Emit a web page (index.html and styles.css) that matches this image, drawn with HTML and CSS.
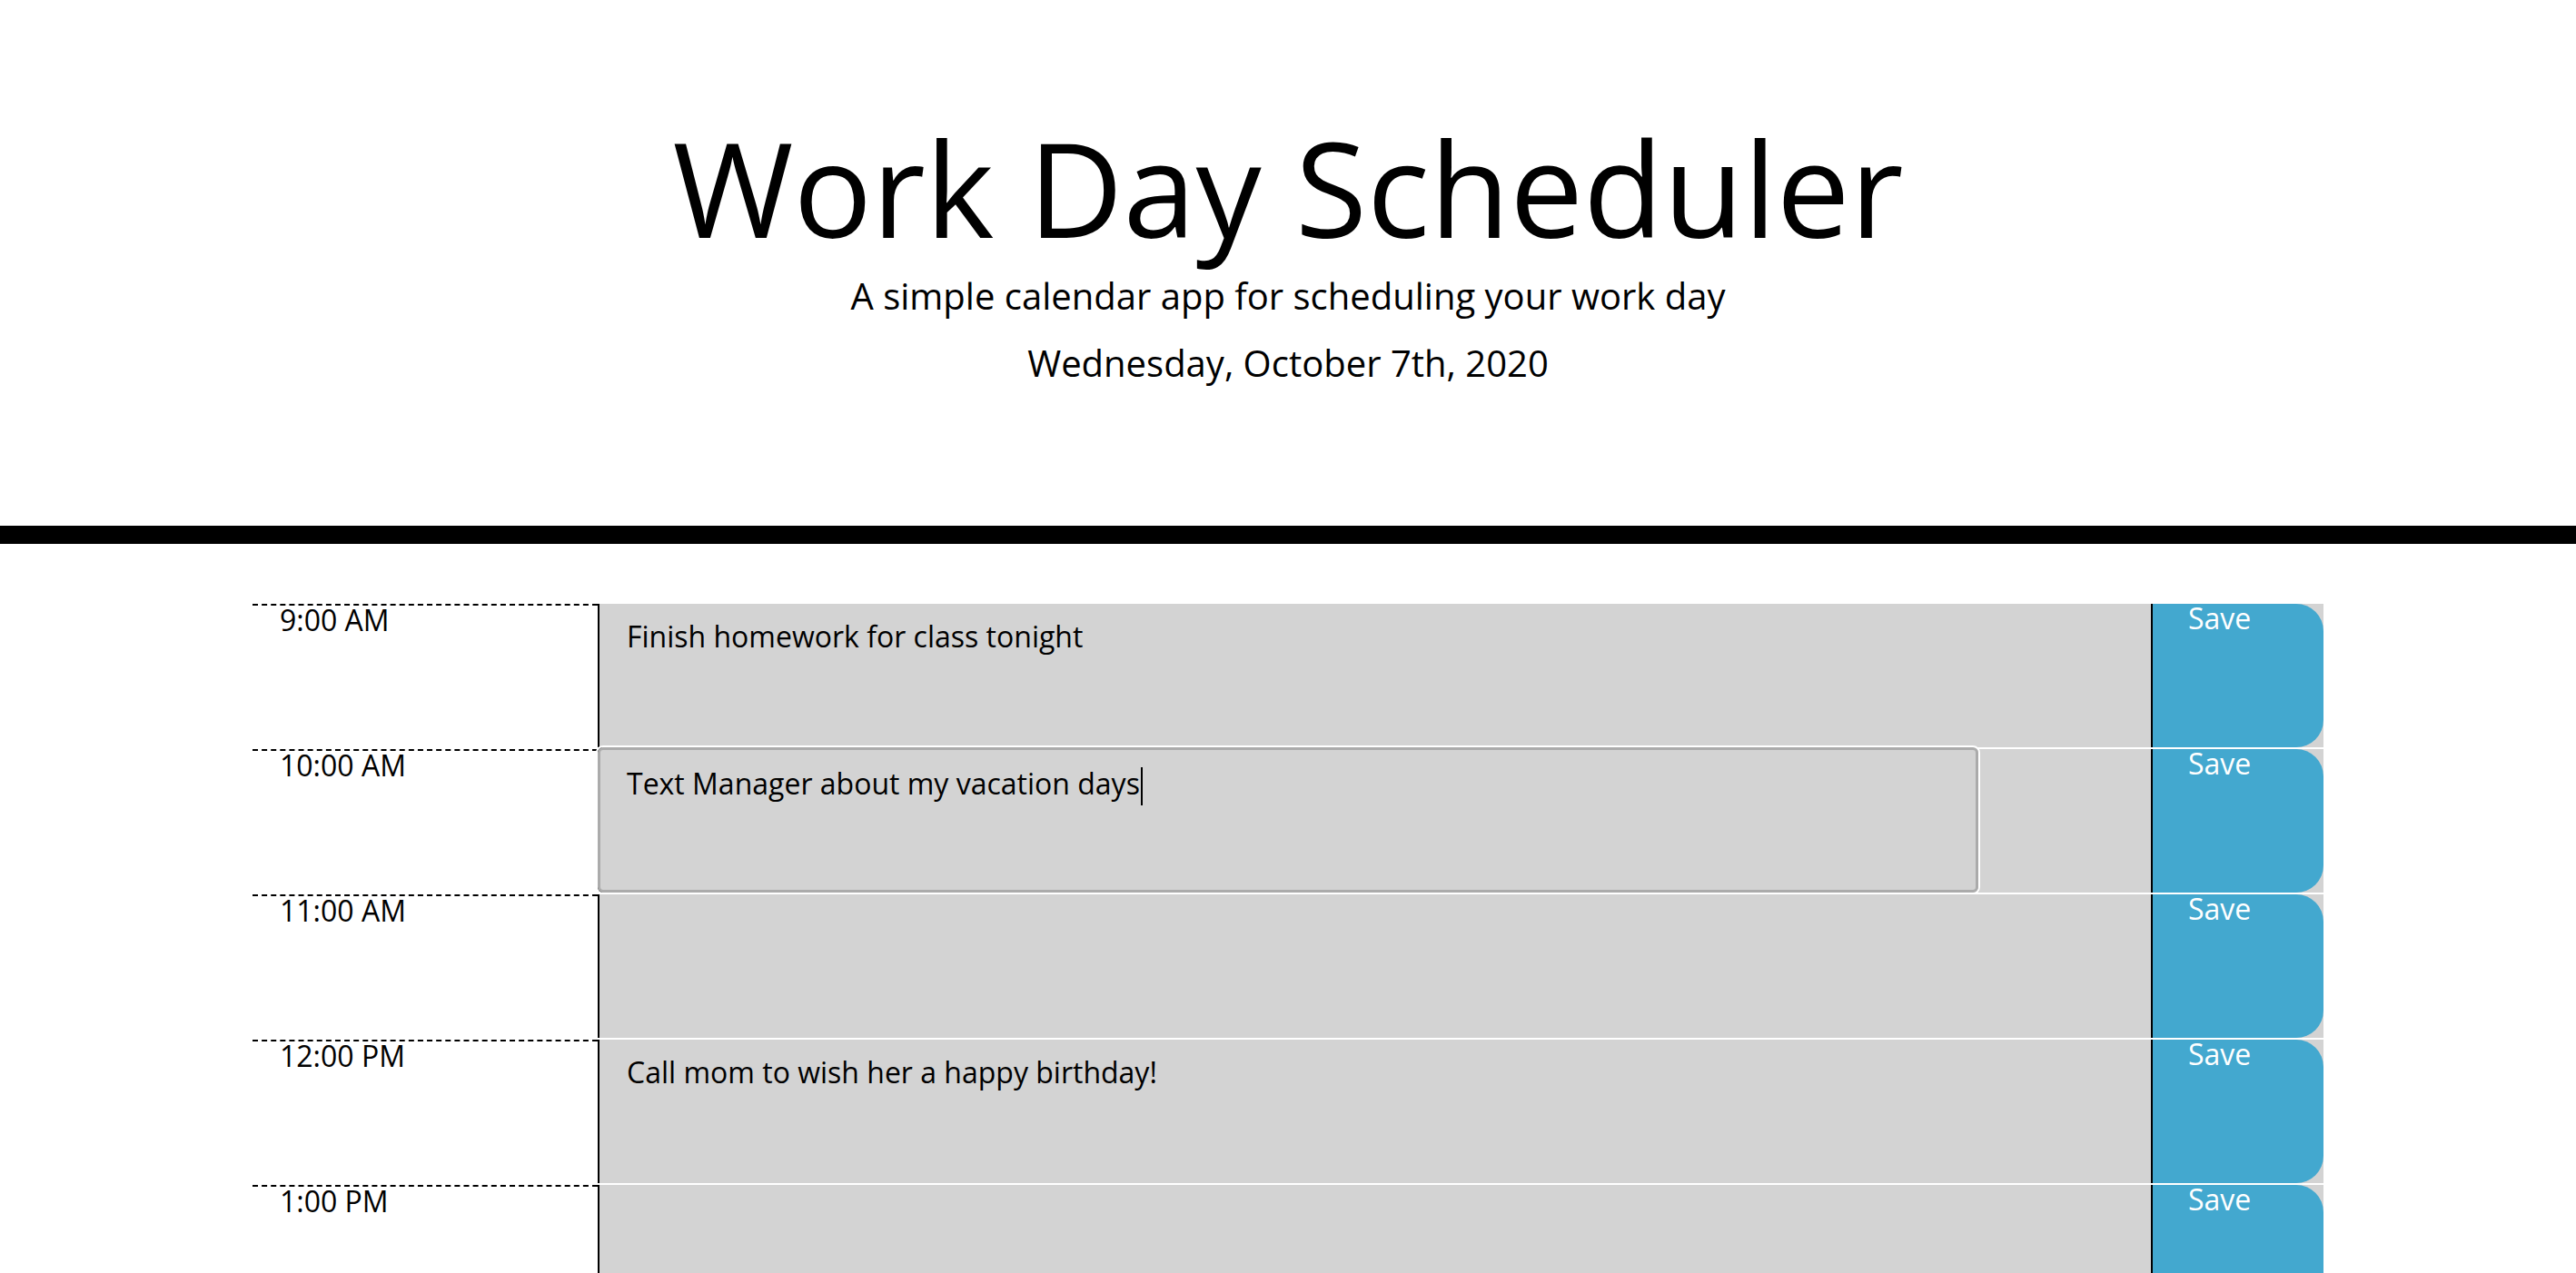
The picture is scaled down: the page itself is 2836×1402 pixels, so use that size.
FILE: index.html
```html
<!DOCTYPE html>
<html lang="en">
<head>
<meta charset="utf-8">
<title>Work Day Scheduler</title>
<link rel="stylesheet" href="styles.css">
</head>
<body>
<header class="jumbotron">
  <h1 class="display-3">Work Day Scheduler</h1>
  <p class="lead">A simple calendar app for scheduling your work day</p>
  <p class="lead current-day">Wednesday, October 7th, 2020</p>
</header>
<main class="container">
  <div class="time-block past">
    <div class="hour">9:00 AM</div>
    <div class="desc-area"><div class="description">Finish homework for class tonight</div></div>
    <button class="saveBtn">Save</button>
  </div>
  <div class="time-block past">
    <div class="hour">10:00 AM</div>
    <div class="desc-area"><div class="description focused">Text Manager about my vacation days<span class="caret"></span></div></div>
    <button class="saveBtn">Save</button>
  </div>
  <div class="time-block past">
    <div class="hour">11:00 AM</div>
    <div class="desc-area"><div class="description"></div></div>
    <button class="saveBtn">Save</button>
  </div>
  <div class="time-block past">
    <div class="hour">12:00 PM</div>
    <div class="desc-area"><div class="description">Call mom to wish her a happy birthday!</div></div>
    <button class="saveBtn">Save</button>
  </div>
  <div class="time-block past">
    <div class="hour">1:00 PM</div>
    <div class="desc-area"><div class="description"></div></div>
    <button class="saveBtn">Save</button>
  </div>
  <div class="time-block past">
    <div class="hour">2:00 PM</div>
    <div class="desc-area"><div class="description"></div></div>
    <button class="saveBtn">Save</button>
  </div>
</main>
</body>
</html>
```
FILE: styles.css
```css
* { box-sizing: border-box; }

body {
  margin: 0;
  font-family: "Open Sans", "Liberation Sans", sans-serif;
  line-height: 1;
  color: #000;
  background: #fff;
}

.jumbotron {
  text-align: center;
  padding: 134px 64px 159px;
  border-bottom: 20px solid #000;
  margin-bottom: 64px;
}

.display-3 {
  margin: 0 0 28px;
  font-size: 144px;
  font-weight: 400;
  line-height: 1;
}

.lead {
  margin: 0 0 34px;
  font-size: 40px;
  line-height: 1;
}

.current-day {
  margin: 0;
}

.container {
  width: 2280px;
  margin: 0 auto;
}

.time-block {
  display: flex;
  height: 160px;
  border-top: 2px solid #fff;
}

.past { background: #d3d3d3; }

.hour {
  flex: 0 0 380px;
  padding: 0 30px;
  background: #fff;
  border-top: 2px dashed #000;
  font-size: 32px;
}

.desc-area {
  flex: 0 0 1710px;
  display: flex;
}

.description {
  flex: 0 0 1520px;
  border-left: 2px solid #000;
  padding: 20px 30px;
  font-size: 32px;
  white-space: pre-wrap;
}

.description.focused {
  margin-top: -2px;
  border-radius: 6px;
  outline: 3px solid #ababab;
  outline-offset: -3px;
  box-shadow: 0 0 0 2px #fff;
  padding-top: 22px;
}

.caret {
  display: inline-block;
  width: 2px;
  height: 42px;
  margin-left: 1px;
  background: #000;
  vertical-align: -12px;
}

.saveBtn {
  flex: 0 0 190px;
  margin: 0;
  padding: 0 0 0 39px;
  border: none;
  border-left: 2px solid #000;
  border-radius: 0 30px 30px 0;
  background: #43a8cf;
  color: #fff;
  font-family: inherit;
  font-size: 32px;
  line-height: 1;
  text-align: left;
  display: flex;
  align-items: flex-start;
}
```
